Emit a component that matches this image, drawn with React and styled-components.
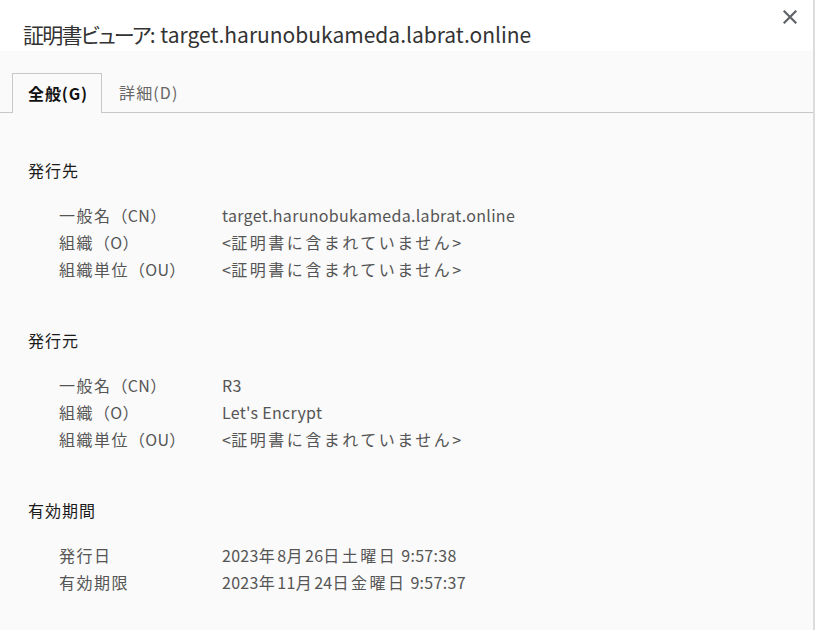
import React from "react";
import styled, { createGlobalStyle } from "styled-components";

const Global = createGlobalStyle`
  html, body { margin: 0; padding: 0; background: #ffffff; }
  body { font-family: "Noto Sans CJK JP", "Noto Sans", sans-serif; }
`;

const Page = styled.div`
  display: flex;
  width: 822px;
  height: 630px;
  overflow: hidden;
  background: #ffffff;
`;

const Dialog = styled.div`
  width: 813px;
  display: flex;
  flex-direction: column;
`;

const Edge = styled.div`
  width: 2px;
  background: #dcdcdc;
`;

const Header = styled.div`
  height: 51px;
  flex: none;
  background: #ffffff;
  position: relative;
  display: flex;
  align-items: flex-end;
  padding-left: 23px;
  box-sizing: border-box;
`;

const Title = styled.h1`
  margin: 0 0 2px 0;
  font-size: 21px;
  font-weight: 400;
  color: #333333;
  line-height: 30px;
  font-feature-settings: "palt";
`;

const Close = styled.button`
  position: absolute;
  top: 7px;
  right: 13px;
  width: 20px;
  height: 20px;
  padding: 0;
  border: none;
  background: transparent;
  display: flex;
  align-items: center;
  justify-content: center;
`;

const Body = styled.div`
  flex: 1;
  background: #fafafa;
  padding-top: 21px;
`;

const TabStrip = styled.div`
  display: flex;
  align-items: flex-end;
  height: 40px;
  padding-left: 12px;
  border-bottom: 1px solid #c8c8c8;
`;

const Tab = styled.div`
  height: ${(p) => (p.$active ? "40px" : "39px")};
  box-sizing: border-box;
  padding: 0 ${(p) => (p.$active ? "13px 0 15px" : "17px")};
  display: flex;
  align-items: center;
  font-size: 16px;
  font-weight: ${(p) => (p.$active ? 700 : 400)};
  color: ${(p) => (p.$active ? "#111111" : "#666666")};
  letter-spacing: ${(p) => (p.$active ? "0.9px" : "1.1px")};
  border: ${(p) => (p.$active ? "1px solid #c8c8c8" : "none")};
  border-bottom: none;
  background: #fafafa;
  margin-bottom: ${(p) => (p.$active ? "-1px" : "0")};
  padding-bottom: 1px;
`;

const Content = styled.div`
  padding: 44px 0 0 28px;
  display: flex;
  flex-direction: column;
`;

const Section = styled.section`
  margin-bottom: 44px;
`;

const SectionTitle = styled.h2`
  margin: 0 0 19px 0;
  font-size: 16px;
  font-weight: 400;
  color: #1a1a1a;
  line-height: 26px;
`;

const Row = styled.div`
  display: grid;
  grid-template-columns: 163px auto;
  padding-left: 31px;
  height: 27px;
  align-items: center;
  font-size: 16px;
  color: #555555;
  line-height: 27px;
  letter-spacing: 0.3px;
  white-space: nowrap;
`;

const Wide = styled.span`
  letter-spacing: ${(p) => p.$spacing || "2.5px"};
`;

function Jp({ text, spacing }) {
  const parts = text.split(/([\u3040-\u30ff\u3400-\u9fff]+)/);
  return parts.map((p, i) =>
    i % 2 ? (
      <Wide key={i} $spacing={spacing}>
        {p}
      </Wide>
    ) : (
      p
    )
  );
}

const sections = [
  {
    title: "発行先",
    rows: [
      ["一般名（CN）", "target.harunobukameda.labrat.online"],
      ["組織（O）", "<証明書に含まれていません>"],
      ["組織単位（OU）", "<証明書に含まれていません>"],
    ],
  },
  {
    title: "発行元",
    rows: [
      ["一般名（CN）", "R3"],
      ["組織（O）", "Let's Encrypt"],
      ["組織単位（OU）", "<証明書に含まれていません>"],
    ],
  },
  {
    title: "有効期間",
    rows: [
      ["発行日", "2023年8月26日土曜日 9:57:38"],
      ["有効期限", "2023年11月24日金曜日 9:57:37"],
    ],
  },
];

export default function App() {
  return (
    <Page>
      <Global />
      <Dialog>
        <Header>
          <Title>
            <Jp text="証明書ビューア: target.harunobukameda.labrat.online" spacing="-1.8px" />
          </Title>
          <Close aria-label="close">
            <svg width="14" height="14" viewBox="0 0 14 14">
              <path d="M1.5 1.5 L12.5 12.5 M12.5 1.5 L1.5 12.5" stroke="#5f6368" strokeWidth="2.2" strokeLinecap="square" />
            </svg>
          </Close>
        </Header>
        <Body>
          <TabStrip>
            <Tab $active>全般(G)</Tab>
            <Tab>詳細(D)</Tab>
          </TabStrip>
          <Content>
            {sections.map((s) => (
              <Section key={s.title}>
                <SectionTitle>
                  <Jp text={s.title} spacing="1px" />
                </SectionTitle>
                {s.rows.map(([k, v]) => (
                  <Row key={k}>
                    <span>
                      <Jp text={k} spacing="1.5px" />
                    </span>
                    <span>
                      <Jp text={v} />
                    </span>
                  </Row>
                ))}
              </Section>
            ))}
          </Content>
        </Body>
      </Dialog>
      <Edge />
    </Page>
  );
}
